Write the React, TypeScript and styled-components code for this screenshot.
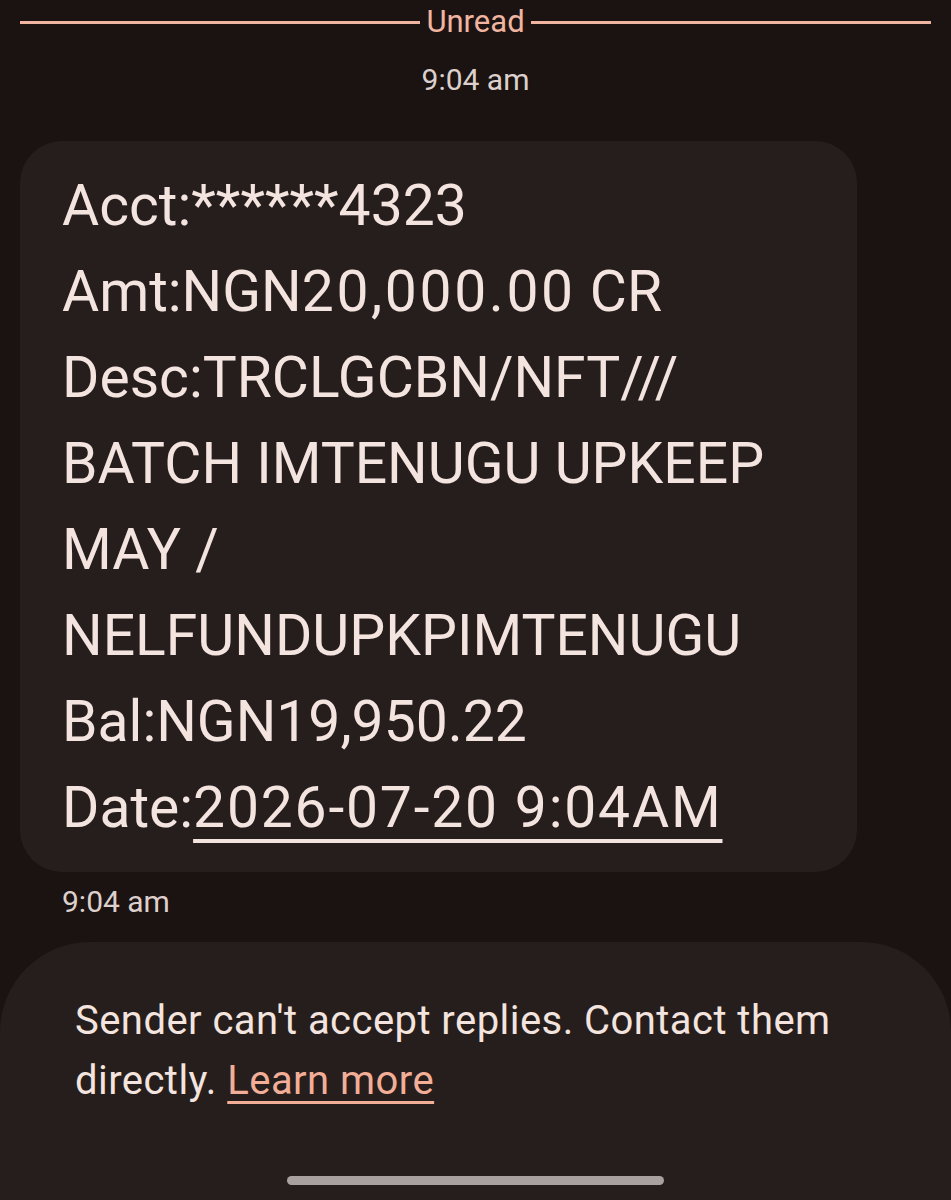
import React from "react";
import styled, { createGlobalStyle } from "styled-components";

const Global = createGlobalStyle`
  html, body { margin: 0; padding: 0; background: #1b1311; }
  body { font-family: Roboto, Inter, sans-serif; }
`;

const Screen = styled.div`
  width: 951px;
  height: 1200px;
  background: #1b1311;
  display: flex;
  flex-direction: column;
  overflow: hidden;
`;

const DividerRow = styled.div`
  display: flex;
  align-items: center;
  gap: 6px;
  padding: 4px 20px 0 20px;
  height: 36px;
`;

const Line = styled.div`
  flex: 1;
  height: 3px;
  background: #f0b5a0;
`;

const DividerLabel = styled.span`
  font-size: 31px;
  color: #f0b5a0;
  line-height: 36px;
`;

const Timestamp = styled.div<{ $align: "center" | "left" }>`
  font-size: 30px;
  color: #ddd0cc;
  text-align: ${(p) => p.$align};
  line-height: 36px;
`;

const CenterStamp = styled(Timestamp)`
  margin-top: 22px;
`;

const Bubble = styled.div`
  margin: 43px 0 0 20px;
  width: 837px;
  box-sizing: border-box;
  background: #261e1c;
  border-radius: 42px;
  padding: 22px 20px 21px 42px;
`;

const BubbleLine = styled.div`
  font-size: 57px;
  line-height: 86px;
  color: #f4e4df;
  white-space: nowrap;
`;

const Digits = styled.span`
  letter-spacing: 2.6px;
`;

const DateLink = styled.span`
  letter-spacing: 1.8px;
  text-decoration: underline;
  text-decoration-thickness: 4px;
  text-underline-offset: 12px;
`;

const BelowStamp = styled(Timestamp)`
  margin: 12px 0 0 62px;
`;

const ReplyPanel = styled.div`
  margin-top: 22px;
  flex: 1;
  background: #261e1c;
  border-radius: 90px 90px 0 0;
  display: flex;
  flex-direction: column;
  align-items: center;
  padding: 49px 0 0 0;
`;

const Notice = styled.div`
  align-self: stretch;
  padding: 0 40px 0 75px;
  font-size: 40px;
  letter-spacing: 0.45px;
  line-height: 60px;
  color: #f4e4df;
`;

const LearnMore = styled.a`
  color: #f2ae97;
  text-decoration: underline;
  text-decoration-thickness: 3px;
  text-underline-offset: 7px;
`;

const HomeBar = styled.div`
  margin-top: auto;
  margin-bottom: 15px;
  width: 377px;
  height: 9px;
  border-radius: 5px;
  background: #a9a19f;
`;

export default function App() {
  return (
    <Screen>
      <Global />
      <DividerRow>
        <Line />
        <DividerLabel>Unread</DividerLabel>
        <Line />
      </DividerRow>
      <CenterStamp $align="center">9:04 am</CenterStamp>
      <Bubble>
        <BubbleLine>Acct:******4323</BubbleLine>
        <BubbleLine>
          Amt:NGN<Digits>20,000.00</Digits> CR
        </BubbleLine>
        <BubbleLine>Desc:TRCLGCBN/NFT///</BubbleLine>
        <BubbleLine>BATCH IMTENUGU UPKEEP</BubbleLine>
        <BubbleLine>MAY /</BubbleLine>
        <BubbleLine>NELFUNDUPKPIMTENUGU</BubbleLine>
        <BubbleLine>Bal:NGN19,950.22</BubbleLine>
        <BubbleLine>
          Date:<DateLink>2026-07-20 9:04AM</DateLink>
        </BubbleLine>
      </Bubble>
      <BelowStamp $align="left">9:04 am</BelowStamp>
      <ReplyPanel>
        <Notice>
          Sender can't accept replies. Contact them directly.{" "}
          <LearnMore>Learn more</LearnMore>
        </Notice>
        <HomeBar />
      </ReplyPanel>
    </Screen>
  );
}
